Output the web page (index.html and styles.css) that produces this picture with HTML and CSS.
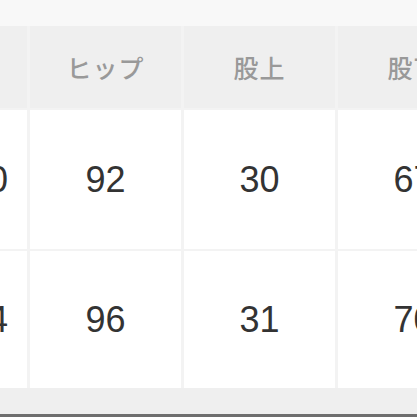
FILE: index.html
```html
<!DOCTYPE html>
<html lang="ja">
<head>
<meta charset="utf-8">
<link rel="stylesheet" href="styles.css">
</head>
<body>
<div class="page">
  <div class="top-strip"></div>
  <div class="size-table">
    <div class="cell head"></div>
    <div class="cell head">ヒップ</div>
    <div class="cell head">股上</div>
    <div class="cell head">股下</div>
    <div class="cell val">70</div>
    <div class="cell val">92</div>
    <div class="cell val">30</div>
    <div class="cell val">67</div>
    <div class="cell val">74</div>
    <div class="cell val">96</div>
    <div class="cell val">31</div>
    <div class="cell val">70</div>
  </div>
  <div class="bottom-strip"></div>
</div>
</body>
</html>
```

FILE: styles.css
```css
html, body {
  margin: 0;
  padding: 0;
  overflow: hidden;
  background: #ffffff;
}
.page {
  width: 417px;
  height: 417px;
  overflow: hidden;
  display: flex;
  flex-direction: column;
}
.top-strip {
  height: 26px;
  background: #f8f8f8;
  flex: none;
}
.size-table {
  flex: none;
  margin-left: -51px;
  width: 540px;
  display: grid;
  grid-template-columns: 78px 151px 151px 151px;
  grid-template-rows: 82px 139px 137px;
  column-gap: 3px;
  row-gap: 2px;
  background: #f3f3f3;
}
.cell {
  display: flex;
  align-items: center;
  justify-content: center;
  white-space: nowrap;
  overflow: hidden;
}
.head {
  background: #efefef;
  color: #999999;
  font-family: "Noto Sans CJK JP", "Noto Sans", sans-serif;
  font-size: 25px;
  font-weight: 500;
  letter-spacing: 1px;
}
.val {
  background: #ffffff;
  color: #333333;
  font-family: "Liberation Sans", Arial, sans-serif;
  font-size: 36px;
}
.bottom-strip {
  flex: none;
  height: 26px;
  background: #efefef;
  border-bottom: 3px solid #6e6e6e;
}
```
